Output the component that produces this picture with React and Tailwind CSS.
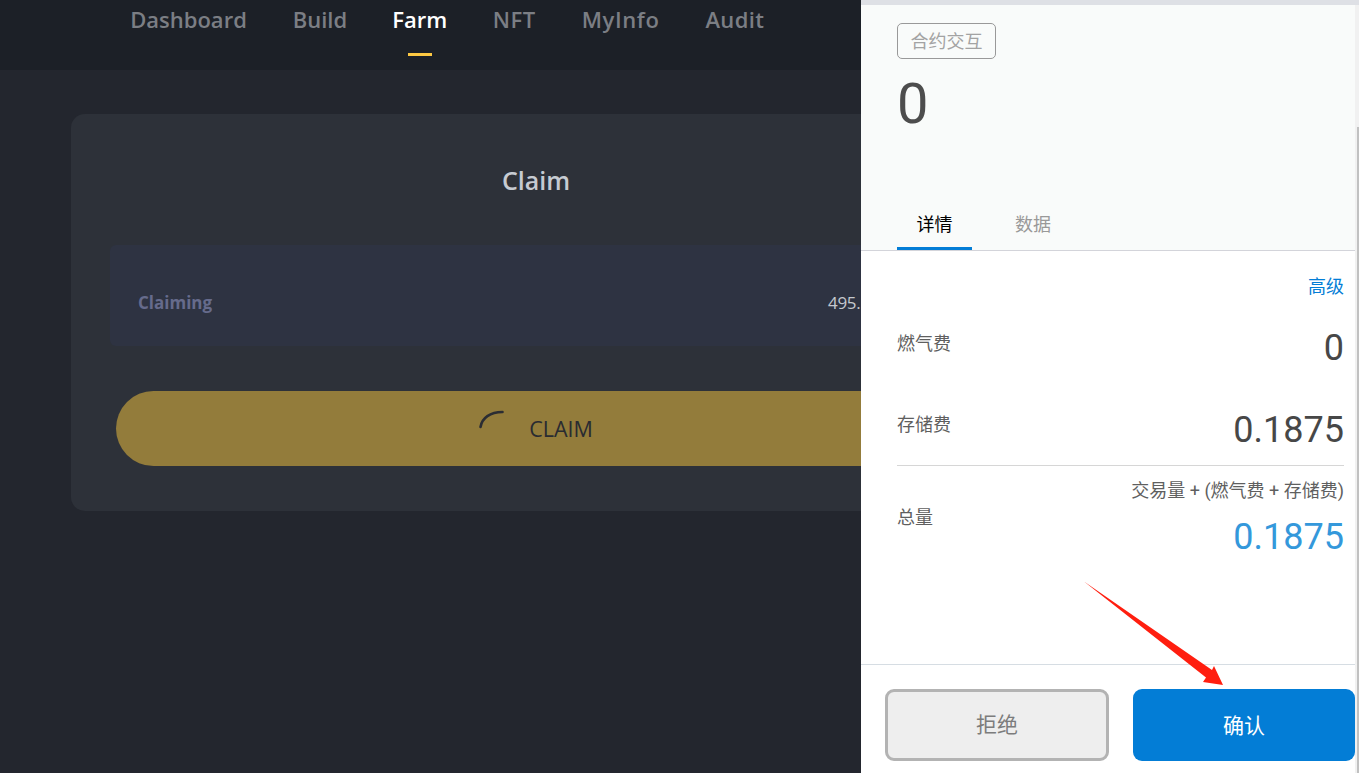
const cjk = { fontFamily: 'Roboto, "Noto Sans CJK SC", sans-serif' };
const seg = { fontFamily: '"Open Sans", "Noto Sans", sans-serif' };

const navItems = [
  { t: "Dashboard", w: "w-[117px]", s: "" },
  { t: "Build", w: "w-[55px]", s: "" },
  { t: "Farm", w: "w-[54px]", s: "" },
  { t: "NFT", w: "w-[44px]", s: "tracking-[0.5px]" },
  { t: "MyInfo", w: "w-[78px]", s: "tracking-[0.6px]" },
  { t: "Audit", w: "w-[60px]", s: "tracking-[0.4px]" },
];

function Nav() {
  return (
    <div className="h-[70px] shrink-0 bg-[#1c2027] pl-[130px] flex gap-[45.4px] items-start" style={seg}>
      {navItems.map(({ t, w, s }) => (
        <div key={t} className={`${w} flex flex-col items-center`}>
          <span className={`text-[22px] leading-[38px] font-semibold whitespace-nowrap ${s} ${t === "Farm" ? "text-white" : "text-[#7b7e84]"}`}>{t}</span>
          <span className={`mt-[15px] w-[24px] h-[3px] ${t === "Farm" ? "bg-[#fdc943]" : "bg-transparent"}`} />
        </div>
      ))}
    </div>
  );
}

function Left() {
  return (
    <div className="w-[861px] shrink-0 h-full overflow-hidden flex flex-col bg-[#23262e]" style={seg}>
      <Nav />
      <div className="pt-[44px] pl-[71px]">
        <div className="w-[930px] h-[397px] rounded-[14px] bg-[#2d3139] px-[39px]">
          <div className="pt-[48px] h-[131px] text-center text-[25px] leading-[36px] font-semibold text-[#c6cbd2]">Claim</div>
          <div className="h-[101px] rounded-[6px] bg-[#2e3342] pl-[28px] pr-[28px] pt-[14px] flex items-center justify-between">
            <span className="text-[17px] font-bold text-[#666b8c]">Claiming</span>
            <span className="w-[106px] text-[17px] text-[#c4c8ce] tracking-[-0.3px]">495.</span>
          </div>
          <div className="mt-[45px] mx-[6px] h-[75px] rounded-full bg-[#937c3b] flex items-center justify-center gap-[25px]">
            <svg width="25" height="19" viewBox="0 0 25 19" className="-mt-[18px]" fill="none">
              <path d="M1.5 17 C3 8 11 2 23.5 2" stroke="#2b2d33" strokeWidth="2.6" strokeLinecap="round" />
            </svg>
            <span className="text-[21.5px] leading-[28px] text-[#292b31]">CLAIM</span>
          </div>
        </div>
      </div>
    </div>
  );
}

function Row({ label, value, top }) {
  return (
    <div className="flex items-start justify-between">
      <span className={`${top} text-[18px] leading-[26px] text-[#5f5f5f]`}>{label}</span>
      <span className="text-[36px] leading-[42px] text-[#474747]">{value}</span>
    </div>
  );
}

function Panel() {
  return (
    <div className="flex-1 min-w-0 h-full flex flex-col bg-white" style={cjk}>
      <div className="h-[5px] shrink-0 bg-[#dee0e5]" />
      <div className="flex-1 min-h-0 flex">
        <div className="flex-1 min-w-0 flex flex-col">
          <div className="h-[246px] shrink-0 bg-[#f9fbfa] border-b border-[#d3d4da] pl-[36px] flex flex-col">
            <div className="mt-[18px] w-[99px] h-[36px] border border-[#999999] rounded-[5px] flex items-center justify-center text-[18px] text-[#a3a3a3]">合约交互</div>
            <div className="mt-[12px] h-[66px] text-[56px] leading-[66px] text-[#4d4d4d]">0</div>
            <div className="mt-[auto] flex">
              <div className="w-[75px] h-[46px] border-b-[3px] border-[#037dd6] text-center text-[18px] leading-[42px] text-black">详情</div>
              <div className="w-[122px] h-[46px] text-center text-[18px] leading-[42px] text-[#999999]">数据</div>
            </div>
          </div>
          <div className="flex-1 min-h-0 pl-[36px] pr-[11px] pt-[23px]">
            <div className="text-right text-[18px] leading-[26px] text-[#037dd6]">高级</div>
            <div className="mt-[27px]"><Row label="燃气费" value="0" top="pt-[4px]" /></div>
            <div className="mt-[40px] pb-[14px] border-b border-[#d6d6d6]"><Row label="存储费" value="0.1875" top="pt-[3px]" /></div>
            <div className="flex items-center justify-between pt-[12px]">
              <span className="text-[18px] leading-[26px] text-[#5f5f5f]">总量</span>
              <div className="text-right">
                <div className="text-[18px] leading-[26px] text-[#5f5f5f]">交易量 + (燃气费 + 存储费)</div>
                <div className="mt-[12px] text-[36px] leading-[42px] text-[#3498db]">0.1875</div>
              </div>
            </div>
          </div>
          <div className="h-[109px] shrink-0 border-t border-[#d6dde3] pl-[24px] pt-[24px] flex gap-[24px]">
            <div className="w-[224px] h-[72px] pt-[2px] rounded-[9px] border-[3px] border-[#b3b3b3] bg-[#eeeeee] flex items-center justify-center text-[21px] text-[#7c7c7c]">拒绝</div>
            <div className="w-[222px] h-[72px] pt-[3px] rounded-[9px] bg-[#037dd6] flex items-center justify-center text-[21px] text-white">确认</div>
          </div>
        </div>
        <div className="w-[4px] shrink-0 bg-[#f1f1f1] flex flex-col items-end">
          <div className="mt-[122px] w-[2px] flex-1 bg-[#c1c1c1]" />
        </div>
      </div>
    </div>
  );
}

export default function App() {
  return (
    <div className="relative w-[1359px] h-[773px] overflow-hidden flex">
      <Left />
      <Panel />
      <svg className="absolute left-0 top-0 pointer-events-none" width="1359" height="773" viewBox="0 0 1359 773">
        <polygon points="1084,581.5 1212,670 1214,666 1223,685 1203,682 1206,677.5" fill="#ff1e0f" />
      </svg>
    </div>
  );
}
